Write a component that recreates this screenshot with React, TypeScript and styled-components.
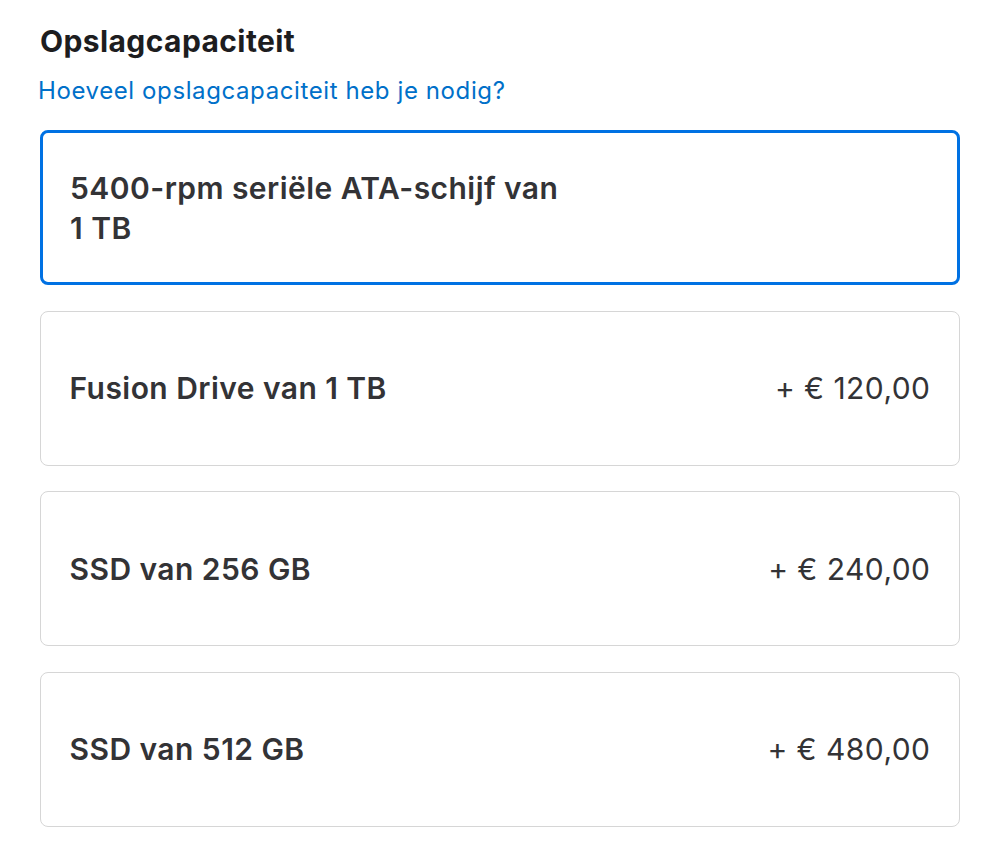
import React from "react";
import styled, { createGlobalStyle } from "styled-components";

const Global = createGlobalStyle`
  html, body { margin: 0; padding: 0; background: #fff; }
  body { font-family: Inter, "Noto Sans", sans-serif; -webkit-font-smoothing: antialiased; }
`;

const Page = styled.div`
  padding: 23px 40px 0 40px;
  width: 920px;
`;

const Title = styled.h2`
  margin: 0;
  font-size: 30px;
  line-height: 36px;
  font-weight: 650;
  color: #1d1d1f;
  letter-spacing: 0.4px;
`;

const Link = styled.a`
  display: block;
  width: fit-content;
  margin: 17px 0 0 -2px;
  font-size: 24px;
  line-height: 30px;
  color: #0070c9;
  text-decoration: none;
  letter-spacing: 0.6px;
`;

const List = styled.div`
  margin-top: 24px;
  display: flex;
  flex-direction: column;
  gap: 25.5px;
`;

const Option = styled.div<{ $selected?: boolean }>`
  box-sizing: border-box;
  height: 155px;
  border-radius: 8px;
  border: ${(p) => (p.$selected ? "3px solid #0071e3" : "1.5px solid #d6d6d6")};
  padding: 0 ${(p) => (p.$selected ? 27 : 28.5)}px;
  display: flex;
  align-items: center;
  justify-content: space-between;
  gap: 24px;
  color: #333336;
`;

const Label = styled.div`
  font-size: 30px;
  line-height: 40px;
  font-weight: 600;
  max-width: 520px;
  letter-spacing: 0.45px;
`;

const Price = styled.div`
  font-size: 30px;
  line-height: 40px;
  font-weight: 400;
  white-space: nowrap;
  letter-spacing: 0.45px;
`;

const options = [
  { label: "5400-rpm seriële ATA-schijf van 1\u00a0TB", price: "", selected: true },
  { label: "Fusion Drive van 1 TB", price: "+ € 120,00" },
  { label: "SSD van 256 GB", price: "+ € 240,00" },
  { label: "SSD van 512 GB", price: "+ € 480,00" },
];

export default function App() {
  return (
    <>
      <Global />
      <Page>
        <Title>Opslagcapaciteit</Title>
        <Link href="#">Hoeveel opslagcapaciteit heb je nodig?</Link>
        <List>
          {options.map((o) => (
            <Option key={o.label} $selected={o.selected}>
              <Label>{o.label}</Label>
              {o.price && <Price>{o.price}</Price>}
            </Option>
          ))}
        </List>
      </Page>
    </>
  );
}
